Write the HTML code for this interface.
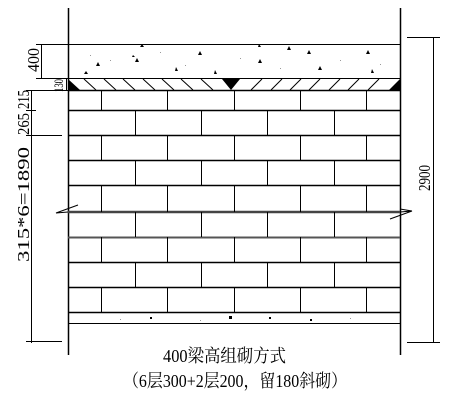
<!DOCTYPE html>
<html><head><meta charset="utf-8"><style>
html,body{margin:0;padding:0;background:#fff;width:453px;height:402px;overflow:hidden}
svg{display:block}
.d{font-family:"Liberation Serif","Noto Serif CJK SC",serif;font-size:17px;fill:#000}
</style></head><body>
<svg width="453" height="402" viewBox="0 0 453 402" xmlns="http://www.w3.org/2000/svg">
<g stroke="#000" fill="none" stroke-width="1">
<line x1="68.5" y1="8" x2="68.5" y2="355" stroke-width="1.5"/>
<line x1="400.5" y1="8" x2="400.5" y2="355" stroke-width="1.5"/>
<line x1="68" y1="44.5" x2="400" y2="44.5"/>
<line x1="68" y1="78.5" x2="400" y2="78.5"/>
<line x1="68" y1="90.5" x2="400" y2="90.5" stroke-width="1.5"/>
<path d="M84 79 L96 90 M104 79 L116 90 M123 79 L135 90 M143 79 L155 90 M162 79 L174 90 M181 79 L193 90 M201 79 L213 90"/>
<path d="M251 90 L262 79 M271 90 L282 79 M290 90 L301 79 M309 90 L320 79 M329 90 L340 79 M348 90 L359 79 M368 90 L379 79"/>
<g stroke-width="1.5">
<line x1="68" y1="110.5" x2="400" y2="110.5"/>
<line x1="68" y1="135.5" x2="400" y2="135.5"/>
<line x1="68" y1="160.5" x2="400" y2="160.5"/>
<line x1="68" y1="185.5" x2="400" y2="185.5"/>
<line x1="68" y1="262.5" x2="400" y2="262.5"/>
<line x1="68" y1="287.5" x2="400" y2="287.5"/>
<line x1="68" y1="312.5" x2="400" y2="312.5"/>
</g>
<line x1="68" y1="212" x2="400" y2="212" stroke-width="2.5" stroke="#444"/>
<line x1="68" y1="237.5" x2="400" y2="237.5" stroke-width="2" stroke="#555"/>
<line x1="68" y1="323.5" x2="400" y2="323.5"/>
<path d="M101.5 90V110 M167.5 90V110 M234.5 90V110 M300.5 90V110 M366.5 90V110
M101.5 135V160 M167.5 135V160 M234.5 135V160 M300.5 135V160 M366.5 135V160
M101.5 185V212 M167.5 185V212 M234.5 185V212 M300.5 185V212 M366.5 185V212
M101.5 237V262 M167.5 237V262 M234.5 237V262 M300.5 237V262 M366.5 237V262
M101.5 287V312 M167.5 287V312 M234.5 287V312 M300.5 287V312 M366.5 287V312"/>
<path d="M135.5 110V135 M201.5 110V135 M267.5 110V135 M334.5 110V135
M135.5 160V185 M201.5 160V185 M267.5 160V185 M334.5 160V185
M135.5 212V237 M201.5 212V237 M267.5 212V237 M334.5 212V237
M135.5 262V287 M201.5 262V287 M267.5 262V287 M334.5 262V287"/>
<path d="M68 212 L56 213 L78 205"/>
<path d="M400 212 L412 211 L390 219 M412 211 L400 209"/>
<path d="M41.5 44V78 M36 44.5H68 M36 78.5H68"/>
<path d="M66.5 78V90"/>
<path d="M31.5 90V343 M26 90.5H68 M26 110.5H36 M26 135.5H62 M26 341.5H62"/>
<path d="M433.5 37V342 M407 37.5H440 M407 342.5H440"/>
</g>
<polygon points="68,79 68,90 80,90" fill="#000"/>
<polygon points="222,79 240,79 231,90" fill="#000"/>
<polygon points="400,79 400,90 389,90" fill="#000"/>
<g fill="#000">
<polygon points="140,47 144,47 142,44"/><polygon points="198,55 202,55 200,51"/><polygon points="135,62 139,62 137,58"/>
<polygon points="96,66 100,66 98,62"/><polygon points="84,74 88,74 86,71"/><polygon points="175,71 178,71 176,67"/>
<polygon points="214,74 217,74 215,70"/><polygon points="258,63 262,63 260,59"/><polygon points="287,50 291,50 289,46"/>
<polygon points="307,54 311,54 309,50"/><polygon points="318,70 322,70 320,66"/><polygon points="366,54 370,54 368,50"/>
<polygon points="371,73 374,73 372,69"/><polygon points="258,47 261,47 259,44"/><polygon points="132,57 135,57 133,55"/>
<rect x="229" y="316" width="3" height="3"/><rect x="150" y="317" width="2" height="2"/><rect x="269" y="317" width="2" height="2"/><rect x="310" y="319" width="2" height="2"/>
<g fill="#999"><rect x="90" y="55" width="1" height="1"/><rect x="110" y="60" width="1" height="1"/><rect x="160" y="52" width="1" height="1"/><rect x="185" y="65" width="1" height="1"/><rect x="240" y="58" width="1" height="1"/><rect x="280" y="68" width="1" height="1"/><rect x="340" y="60" width="1" height="1"/><rect x="380" y="64" width="1" height="1"/><rect x="120" y="319" width="1" height="1"/><rect x="200" y="320" width="1" height="1"/><rect x="350" y="318" width="1" height="1"/></g>
</g>
<g class="d">
<text transform="translate(39,72) rotate(-90)" textLength="24" lengthAdjust="spacingAndGlyphs">400</text>
<text transform="translate(63,92) rotate(-90)" font-size="13" textLength="13" lengthAdjust="spacingAndGlyphs">130</text>
<text transform="translate(29,109) rotate(-90)" textLength="19" lengthAdjust="spacingAndGlyphs">215</text>
<text transform="translate(29,135) rotate(-90)" textLength="22" lengthAdjust="spacingAndGlyphs">265</text>
<text transform="translate(29,262) rotate(-90)" textLength="115" lengthAdjust="spacingAndGlyphs">315*6=1890</text>
<text transform="translate(430,191) rotate(-90)" textLength="26" lengthAdjust="spacingAndGlyphs">2900</text>
</g>
<text x="163" y="362" font-family="'Liberation Serif','Noto Serif CJK SC',serif" font-size="18" textLength="123" lengthAdjust="spacingAndGlyphs">400梁高组砌方式</text>
<text x="123" y="387" font-family="'Liberation Serif','Noto Serif CJK SC',serif" font-size="18" textLength="224" lengthAdjust="spacingAndGlyphs">（6层300+2层200，留180斜砌）</text>
</svg>
</body></html>
